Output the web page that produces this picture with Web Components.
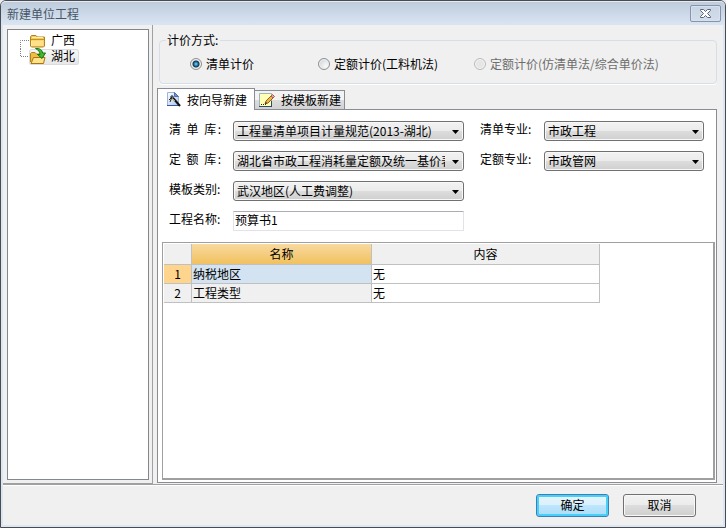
<!DOCTYPE html>
<html lang="zh-CN">
<head>
<meta charset="utf-8">
<meta name="viewport" content="width=device-width, initial-scale=1">
<title>新建单位工程</title>
<style>
	body {
		margin: 0;
		color: #000;
		background: #e9edf2;
		font: 12px/14px "Noto Sans CJK SC", sans-serif;
	}
</style>
</head>
<body>
<dialog-window caption="新建单位工程">
	<region-tree slot="side">
		<region-item label="广西"></region-item>
		<region-item label="湖北" selected></region-item>
	</region-tree>

	<radio-group caption="计价方式:">
		<option value="list" selected>清单计价</option>
		<option value="quota">定额计价(工料机法)</option>
		<option value="mixed" disabled>定额计价(仿清单法/综合单价法)</option>
	</radio-group>

	<tab-panel>
		<field-grid>
			<select-field label="清 单 库:" value="工程量清单项目计量规范(2013-湖北)" spread></select-field>
			<select-field label="清单专业:" value="市政工程"></select-field>
			<select-field label="定 额 库:" value="湖北省市政工程消耗量定额及统一基价表" spread></select-field>
			<select-field label="定额专业:" value="市政管网"></select-field>
			<select-field label="模板类别:" value="武汉地区(人工费调整)" class="first"></select-field>
			<text-field label="工程名称:" value="预算书1" class="first"></text-field>
		</field-grid>
		<property-grid></property-grid>
	</tab-panel>

	<dialog-button slot="actions" primary>确定</dialog-button>
	<dialog-button slot="actions">取消</dialog-button>
</dialog-window>

<script>
function makeTemplate(html) {
	const template = document.createElement('template');
	template.innerHTML = html;
	return template;
}

class BaseElement extends HTMLElement {
	constructor() {
		super();
		const root = this.attachShadow({mode: 'open'});
		root.appendChild(this.constructor.template.content.cloneNode(true));
	}
}

class DialogWindow extends BaseElement {
	static template = makeTemplate(`
		<style>
			:host {
				display: flex;
				flex-direction: column;
				box-sizing: border-box;
				min-height: 100vh;
				padding: 0 2px 2px;
				border: 1px solid #4b4a4f;
				border-radius: 6px 6px 0 0;
				background: #dbe6f3;
			}

			header {
				display: flex;
				align-items: center;
				justify-content: space-between;
				height: 24px;
				margin: 0 -2px;
				padding: 0 4px 0 6px;
				box-sizing: border-box;
				border-top: 1px solid #e4ebf3;
				border-radius: 5px 5px 0 0;
				background: linear-gradient(#bfccdc, #d9e5f3);
			}

			h1 {
				margin: 0;
				color: #465566;
				font-size: 12px;
				font-weight: 400;
			}

			header button {
				display: flex;
				align-items: center;
				justify-content: center;
				width: 31px;
				height: 17px;
				padding: 0;
				border: 1px solid #8593ad;
				border-radius: 2px;
				background: linear-gradient(#c8d4e3, #d3deeb);
				box-shadow: inset 0 0 0 1px #d8e2ee;
			}

			main {
				display: flex;
				flex: 1;
				background: #f0f0f0;
			}

			aside {
				display: flex;
				flex: 0 0 142px;
				padding: 4px 3px 3px 4px;
				border-right: 1px solid #a0a0a0;
				border-bottom: 1px solid #a0a0a0;
			}

			section {
				display: flex;
				flex: 1;
				flex-direction: column;
				min-width: 0;
				padding: 8px 6px 1px 4px;
			}

			footer {
				display: flex;
				justify-content: flex-end;
				gap: 14px;
				padding: 9px 27px 8px 8px;
				border-top: 1px solid #a0a0a0;
				background: #f0f0f0;
				box-shadow: inset 0 1px #fff;
			}
		</style>

		<header>
			<h1></h1>
			<button type="button" aria-label="关闭">
				<svg width="13" height="11" viewBox="0 0 13 11">
					<path d="M1.5 1.5H4.5L6.5 3.5L8.5 1.5H11.5V2.5L8.5 5.5L11.5 8.5V9.5H8.5L6.5 7.5L4.5 9.5H1.5V8.5L4.5 5.5L1.5 2.5Z" fill="#fff" stroke="#5b6478"/>
				</svg>
			</button>
		</header>
		<main>
			<aside><slot name="side"></slot></aside>
			<section><slot></slot></section>
		</main>
		<footer><slot name="actions"></slot></footer>
	`);

	connectedCallback() {
		this.shadowRoot.querySelector('h1').textContent = this.getAttribute('caption');
	}
}

class RegionTree extends BaseElement {
	static template = makeTemplate(`
		<style>
			:host {
				display: block;
				flex: 1;
				border: 1px solid #828790;
				padding: 3px 0 0 12px;
				background: #fff;
			}
		</style>
		<slot></slot>
	`);
}

class RegionItem extends BaseElement {
	static template = makeTemplate(`
		<style>
			:host {
				display: flex;
				height: 16px;
			}

			.branch {
				flex: none;
				width: 9px;
			}

			button {
				display: flex;
				align-items: center;
				gap: 5px;
				height: 16px;
				padding: 0 4px 0 1px;
				border: 0;
				border-radius: 3px;
				background: none;
				color: inherit;
				font: inherit;
			}

			span {
				margin-top: -2px;
			}

			:host([selected]) button {
				background: linear-gradient(#f8f8f8, #e6e6e6);
				box-shadow: inset 0 0 0 1px #dcdcdc;
			}

			.open {
				display: none;
			}

			:host([selected]) .open {
				display: block;
			}

			:host([selected]) .closed {
				display: none;
			}

			svg {
				overflow: visible;
			}
		</style>

		<svg class="branch" width="9" height="16" viewBox="0 0 9 16">
			<path class="line" fill="none" stroke="#808080" stroke-dasharray="1 1"/>
		</svg>
		<button type="button">
			<svg class="closed" width="16" height="16" viewBox="0 0 16 16">
				<path d="M.5 4L1.500 2.500H6L7.500 4H14.500V13L13.500 14H1.500L.5 13Z" fill="#f3cc5c" stroke="#b5811b"/>
				<path d="M1 6.500H14" stroke="#c4922a"/>
				<path d="M1.500 7.500H13.500V13H1.500Z" fill="#ffe18a"/>
				<path d="M2 4.500H13M1.500 8V13" stroke="#fff0a7"/>
			</svg>
			<svg class="open" width="16" height="16" viewBox="0 0 16 16">
				<path d="M.5 13V4.500L1.500 3.500H5L6.500 5H13.500V8" fill="#efbd47" stroke="#b18319"/>
				<path d="M1 14.500L3.500 8.500H15L13.500 14.500Z" fill="#ffe28a" stroke="#aa7510"/>
				<path d="M5.500 -.5C9.500 -1 12.500 1 12.500 4H15.500L12 9.500L7.500 5.500H10C10 3 8.500 1 5.500 -.5Z" fill="#40b82f" stroke="#167719"/>
			</svg>
			<span></span>
		</button>
	`);

	connectedCallback() {
		const selected = this.hasAttribute('selected');
		this.shadowRoot.querySelector('span').textContent = this.getAttribute('label');
		this.shadowRoot.querySelector('.line').setAttribute('d', selected ? 'M.5 0V7.5H9' : 'M9 7.5H.5V16');
	}
}

class RadioGroup extends BaseElement {
	static template = makeTemplate(`
		<style>
			:host {
				display: block;
				margin: 0 0 4px 2px;
			}

			fieldset {
				min-width: 0;
				margin: 0;
				padding: 10px 0 12px 30px;
				border: 1px solid #d5dfe5;
				border-radius: 4px;
				box-shadow: 0 1px #fff;
			}

			legend {
				margin-left: -24px;
				padding: 0 2px 0 1px;
			}

			.options {
				display: grid;
				grid-template-columns: 128px 156px 1fr;
			}

			label {
				display: flex;
				align-items: center;
				gap: 4px;
				white-space: nowrap;
			}

			input {
				appearance: none;
				box-sizing: border-box;
				width: 12px;
				height: 12px;
				margin: 0;
				border: 1px solid #8e8f8f;
				border-radius: 50%;
				background: radial-gradient(circle at 70% 70%, #fafafa, #c9ced2);
				box-shadow: inset 0 0 0 1px #f4f4f4;
			}

			input:checked {
				background: radial-gradient(circle at 5px 5px, #8fe0fb 0, #3ba9d4 1px, #12354f 3px, #17344b 3px, #d5dde2 4px);
			}

			input:disabled {
				border-color: #bcbcbc;
				background: #e6e6e6;
			}

			input:disabled + span {
				color: #6d6d6d;
			}
		</style>

		<fieldset>
			<legend></legend>
			<div class="options"></div>
		</fieldset>
	`);

	connectedCallback() {
		this.shadowRoot.querySelector('legend').textContent = this.getAttribute('caption');
		const options = this.shadowRoot.querySelector('.options');

		this.querySelectorAll('option').forEach(option => {
			const label = document.createElement('label');
			const input = document.createElement('input');
			const text = document.createElement('span');
			input.type = 'radio';
			input.name = 'method';
			input.value = option.value;
			input.checked = option.hasAttribute('selected');
			input.disabled = option.disabled;
			text.textContent = option.textContent;
			label.append(input, text);
			options.appendChild(label);
		});
	}
}

class TabPanel extends BaseElement {
	static template = makeTemplate(`
		<style>
			:host {
				display: flex;
				flex: 1;
				flex-direction: column;
			}

			nav {
				display: flex;
				align-items: flex-end;
				height: 21px;
			}

			button {
				display: flex;
				align-items: center;
				gap: 6px;
				box-sizing: border-box;
				height: 19px;
				padding: 0 3px 0 4px;
				border: 1px solid #898c95;
				border-left: 0;
				border-bottom: 0;
				background: linear-gradient(#f3f3f3 50%, #dddddd 50%, #d2d2d2);
				color: inherit;
				font: inherit;
			}

			button[aria-selected="true"] {
				height: 22px;
				margin-bottom: -1px;
				padding: 0 7px 0 9px;
				border-left: 1px solid #898c95;
				background: #fff;
				z-index: 1;
			}

			.body {
				display: flex;
				flex: 1;
				flex-direction: column;
				border: 1px solid #898c95;
				background: #fff;
			}
		</style>

		<nav role="tablist">
			<button type="button" role="tab" aria-selected="true">
				<svg width="14" height="15" viewBox="0 0 14 15">
					<linearGradient id="page" x2="1" y2="1">
						<stop stop-color="#fff"/>
						<stop offset="1" stop-color="#a9c6f0"/>
					</linearGradient>
					<path d="M.5 .5H7.500L11.500 4.500V13.500H.5Z" fill="url(#page)" stroke="#9db4d8"/>
					<path d="M7.500 .5V4.500H11.500Z" fill="#6f93cf" stroke="#4f70ad"/>
					<path d="M0 13.500H12" stroke="#3756a0"/>
					<path d="M6 6L13 14" stroke="#111" stroke-width="2"/>
					<path d="M6 7L8 9" stroke="#d2a641"/>
					<path d="M2 8L5 5M5 5V3M3 5H7M5 5L3 10" fill="none" stroke="#222"/>
				</svg>
				<span>按向导新建</span>
			</button>
			<button type="button" role="tab" aria-selected="false">
				<svg width="16" height="15" viewBox="0 0 16 15">
					<path d="M.5 .5H12.500V13.500H.5Z" fill="#ffffb8" stroke="#9fb3bd"/>
					<path d="M0 13.500H13M12.500 8V14" stroke="#304b65"/>
					<path d="M2 11.500H7" stroke="#222" stroke-dasharray="1 1"/>
					<path d="M6 11L7 8L13 2L15 4L9 10Z" fill="#f0b44d" stroke="#95601e"/>
					<path d="M12 3L13.500 1.500L15.500 3.500L14 5Z" fill="#e7a09d" stroke="#b05a50"/>
					<path d="M6 11L7 9L8 10Z" fill="#222"/>
				</svg>
				<span>按模板新建</span>
			</button>
		</nav>
		<div class="body"><slot></slot></div>
	`);
}

class FieldGrid extends BaseElement {
	static template = makeTemplate(`
		<style>
			:host {
				display: grid;
				grid-template-columns: 295fr 224fr;
				gap: 10px 16px;
				padding: 11px 12px 11px 11px;
			}

			::slotted(.first) {
				grid-column: 1;
			}
		</style>
		<slot></slot>
	`);
}

const fieldStyles = `
	:host {
		display: flex;
		min-width: 0;
		height: 20px;
	}

	label {
		flex: none;
		width: 52px;
		margin-right: 12px;
		line-height: 16px;
		white-space: nowrap;
	}

	:host([spread]) label {
		text-align: justify;
		text-align-last: justify;
		white-space: normal;
	}

	select,
	input {
		box-sizing: border-box;
		width: 100%;
		min-width: 0;
		height: 20px;
		margin: 0;
		color: inherit;
		font: inherit;
	}
`;

class SelectField extends BaseElement {
	static template = makeTemplate(`
		<style>
			${fieldStyles}

			.box {
				display: grid;
				flex: 1;
				min-width: 0;
				align-items: center;
			}

			select,
			svg {
				grid-area: 1 / 1;
			}

			select {
				appearance: none;
				padding: 0 18px 0 3px;
				border: 1px solid #707070;
				border-radius: 3px;
				background: linear-gradient(#f2f2f2, #ebebeb 50%, #dddddd 50%, #cfcfcf);
				box-shadow: inset 0 0 0 1px #f8f8f8;
			}

			svg {
				justify-self: end;
				margin: 2px 5px 0 0;
				pointer-events: none;
			}
		</style>

		<label for="control"></label>
		<div class="box">
			<select id="control"><option></option></select>
			<svg width="7" height="4" viewBox="0 0 7 4"><path d="M0 0H7L3.500 4Z"/></svg>
		</div>
	`);

	connectedCallback() {
		this.shadowRoot.querySelector('label').textContent = this.getAttribute('label');
		this.shadowRoot.querySelector('option').textContent = this.getAttribute('value');
	}
}

class TextField extends BaseElement {
	static template = makeTemplate(`
		<style>
			${fieldStyles}

			input {
				flex: 1;
				padding: 0 1px 3px;
				border: 1px solid #e2e3ea;
				border-top-color: #abadb3;
				border-radius: 1px;
				background: #fff;
			}
		</style>

		<label for="control"></label>
		<input id="control" type="text">
	`);

	connectedCallback() {
		this.shadowRoot.querySelector('label').textContent = this.getAttribute('label');
		this.shadowRoot.querySelector('input').value = this.getAttribute('value');
	}
}

class PropertyGrid extends BaseElement {
	static template = makeTemplate(`
		<style>
			:host {
				display: block;
				flex: 1;
				margin: 0 1px 2px 4px;
				padding: 1px;
				border: 1px solid #a0a0a0;
				border-right-width: 2px;
				border-bottom-width: 2px;
			}

			table {
				width: 436px;
				max-width: 100%;
				border-spacing: 0;
				table-layout: fixed;
			}

			th,
			td {
				box-sizing: border-box;
				height: 19px;
				padding: 0 1px;
				border: solid #c0c0c0;
				border-width: 0 1px 1px 0;
				font-weight: 400;
				text-align: left;
			}

			thead th {
				height: 21px;
				background: #f0f0f0;
				text-align: center;
			}

			thead .active {
				background: linear-gradient(#f9d99f, #f1c15f);
			}

			tbody th {
				background: #f0f0f0;
			}

			.number {
				width: 28px;
				text-align: center;
			}

			.current .number {
				background: #ffd58d;
			}

			.current .name {
				background: #d3e3f1;
			}
		</style>

		<table>
			<colgroup><col style="width: 28px"><col style="width: 180px"><col></colgroup>
			<thead>
				<tr><th class="number"></th><th class="active" scope="col">名称</th><th scope="col">内容</th></tr>
			</thead>
			<tbody>
				<tr class="current"><th class="number">1</th><th class="name" scope="row">纳税地区</th><td>无</td></tr>
				<tr><th class="number">2</th><th class="name" scope="row">工程类型</th><td>无</td></tr>
			</tbody>
		</table>
	`);
}

class DialogButton extends BaseElement {
	static template = makeTemplate(`
		<style>
			:host {
				display: block;
			}

			button {
				display: block;
				box-sizing: border-box;
				width: 73px;
				height: 23px;
				padding: 0 0 2px;
				border: 1px solid #707070;
				border-radius: 3px;
				background: linear-gradient(#f2f2f2, #ebebeb 50%, #dddddd 50%, #cfcfcf);
				box-shadow: inset 0 0 0 1px #f8f8f8;
				color: inherit;
				font: inherit;
			}

			:host([primary]) button {
				border-color: #3c7fb1;
				background: linear-gradient(#e8f5fc, #d9f0fc 50%, #bee6fd 50%, #aadcf6);
				box-shadow: inset 0 0 0 2px #46d0fa;
			}
		</style>
		<button type="button"><slot></slot></button>
	`);
}

customElements.define('dialog-window', DialogWindow);
customElements.define('region-tree', RegionTree);
customElements.define('region-item', RegionItem);
customElements.define('radio-group', RadioGroup);
customElements.define('tab-panel', TabPanel);
customElements.define('field-grid', FieldGrid);
customElements.define('select-field', SelectField);
customElements.define('text-field', TextField);
customElements.define('property-grid', PropertyGrid);
customElements.define('dialog-button', DialogButton);
</script>
</body>
</html>
